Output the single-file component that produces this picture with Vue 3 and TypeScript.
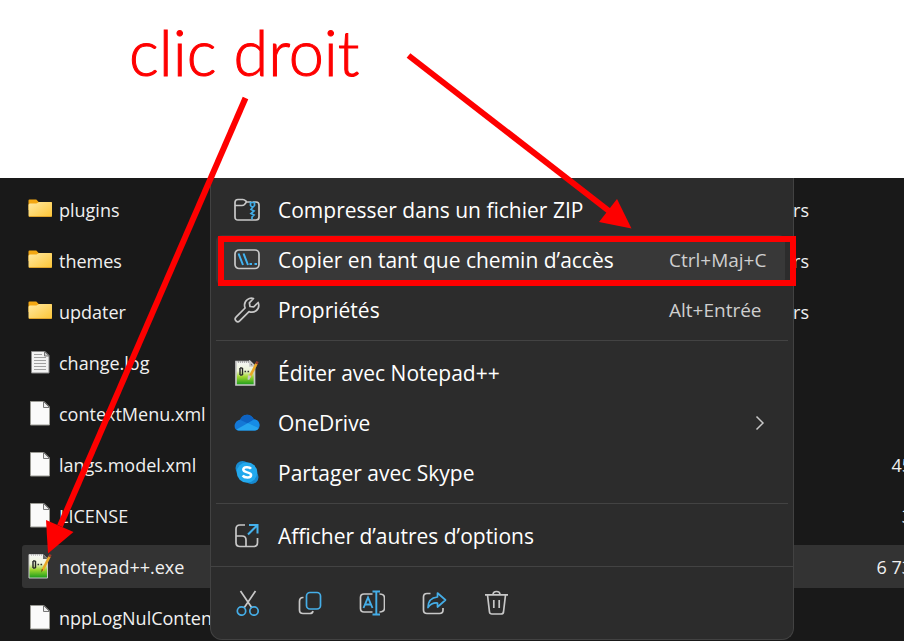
<script setup lang="ts">
type FileKind = 'folder' | 'log' | 'file' | 'npp'

interface FileRow {
  name: string
  kind: FileKind
  type?: string
  size?: string
  selected?: boolean
}

interface MenuItem {
  label: string
  icon: string
  shortcut?: string
  submenu?: boolean
  active?: boolean
}

const files: FileRow[] = [
  { name: 'plugins', kind: 'folder', type: 'ers' },
  { name: 'themes', kind: 'folder', type: 'ers' },
  { name: 'updater', kind: 'folder', type: 'ers' },
  { name: 'change.log', kind: 'log' },
  { name: 'contextMenu.xml', kind: 'file' },
  { name: 'langs.model.xml', kind: 'file', size: '45' },
  { name: 'LICENSE', kind: 'file', size: '3' },
  { name: 'notepad++.exe', kind: 'npp', size: '6 73', selected: true },
  { name: 'nppLogNulConten', kind: 'file' },
]

const groups: MenuItem[][] = [
  [
    { label: 'Compresser dans un fichier ZIP', icon: 'zip' },
    { label: 'Copier en tant que chemin d’accès', icon: 'path', shortcut: 'Ctrl+Maj+C', active: true },
    { label: 'Propriétés', icon: 'wrench', shortcut: 'Alt+Entrée' },
  ],
  [
    { label: 'Éditer avec Notepad++', icon: 'npp' },
    { label: 'OneDrive', icon: 'onedrive', submenu: true },
    { label: 'Partager avec Skype', icon: 'skype' },
  ],
  [{ label: 'Afficher d’autres d’options', icon: 'more' }],
]

const actions = [
  { id: 'cut', label: 'Couper' },
  { id: 'copy', label: 'Copier' },
  { id: 'rename', label: 'Renommer' },
  { id: 'share', label: 'Partager' },
  { id: 'delete', label: 'Supprimer' },
]
</script>

<template>
  <main class="page">
    <svg class="defs" aria-hidden="true">
      <defs>
        <linearGradient id="folderFill" x1="0" y1="0" x2="1" y2="1">
          <stop offset="0" stop-color="#ffe9a2" />
          <stop offset="1" stop-color="#fdc535" />
        </linearGradient>
        <linearGradient id="nppFill" x1="0" y1="0" x2="0" y2="1">
          <stop offset="0" stop-color="#f6f6f6" />
          <stop offset="0.4" stop-color="#eef5d8" />
          <stop offset="0.65" stop-color="#9fd62e" />
          <stop offset="1" stop-color="#169a1c" />
        </linearGradient>
        <symbol id="npp" viewBox="0 0 25 26">
          <path d="M1 1.500h14l4.500 4.500v19H1z" fill="url(#nppFill)" stroke="#c9c9c9" />
          <path d="M3 2h12" stroke="#999" stroke-dasharray="1 1" />
          <path d="M15 1.500l4.500 4.500H15z" fill="#666" />
          <path d="M5 8v7M7.500 8v7" stroke="#222" stroke-width="1.400" />
          <path d="M5 8h2.500M5 15h2.500M9.500 11.500h1.600M12.500 11.500h1.600" stroke="#333" stroke-width="1.300" />
          <path d="M21.500 3.500L14.500 17.500" stroke="#e9a827" stroke-width="2.600" />
          <path d="M22.500 1.500l-1.200 2.400" stroke="#963c2c" stroke-width="2.600" />
          <path d="M15 16.500l-1.600 3 .3-3.200z" fill="#473015" />
        </symbol>
      </defs>
    </svg>

    <header class="note">
      <h1>clic droit</h1>
    </header>

    <section class="explorer">
      <table class="files">
        <tbody>
          <tr v-for="file in files" :key="file.name" :class="{ selected: file.selected }">
            <td class="name">
              <span class="cell">
                <svg v-if="file.kind === 'folder'" class="glyph" viewBox="0 0 25 26">
                  <path d="M.5 6V4.500Q.5 3.500 1.500 3.500h6.800l2.400 2.500h12Q24 6 24 7v7H.5z" fill="#f3a712" />
                  <path d="M.5 9q0-1.500 1.500-1.500h6.500l2.500-1.500h12q1 0 1 1v12.500q0 1.500-1.500 1.500H2Q.5 21 .5 19.500z" fill="url(#folderFill)" />
                  <path d="M1 20.500h22.500" stroke="#dfa32b" />
                </svg>
                <svg v-else-if="file.kind === 'log'" class="glyph" viewBox="0 0 25 26">
                  <path d="M3.500 2.500h13.500l4 4v17.500H3.500z" fill="#f2f2f2" stroke="#8b8b8b" />
                  <path d="M6 5.500h8M6 8.500h12M6 11.500h12M6 14.500h12M6 17.500h12M6 20.500h12" stroke="#a0a0a0" />
                  <path d="M16.500 2.500v4.500h4.500z" fill="#ccc" stroke="#777" />
                </svg>
                <svg v-else-if="file.kind === 'file'" class="glyph" viewBox="0 0 25 26">
                  <path d="M2.500 1.500h13.500l5.500 5.500v18H2.500z" fill="#fafafa" stroke="#9a9a94" />
                  <path d="M15.500 1.500v6h6z" fill="#eee" stroke="#777" />
                </svg>
                <svg v-else class="glyph" viewBox="0 0 25 26"><use href="#npp" /></svg>
                <span>{{ file.name }}</span>
              </span>
            </td>
            <td class="type">{{ file.type }}</td>
            <td class="size">{{ file.size }}</td>
          </tr>
        </tbody>
      </table>

      <nav class="menu" aria-label="Menu contextuel">
        <div v-for="(group, index) in groups" :key="index" class="group">
          <button v-for="item in group" :key="item.label" type="button" class="item" :class="{ active: item.active }">
            <svg class="icon" viewBox="0 0 26 26" fill="none" stroke="#c8c8c8" stroke-width="1.700">
              <template v-if="item.icon === 'zip'">
                <path d="M18 4.500h3.500q3 0 3 3v12q0 3-3 3h-18q-3 0-3-3V5q0-3 3-3h4.800q1.700 0 2.700 1.200l1.200 1.300H17" transform="translate(.5 .5)" />
                <path d="M1 8.500h7q1.500 0 2.500-1l2-2.500" />
                <path d="M16.500 5.500h4v3l-2 2-2-2zM18.500 10.500l-1.500 2 3 1.500-3 2.500 3 1.500-2 2v2.500" stroke="#42aee9" />
              </template>
              <template v-else-if="item.icon === 'path'">
                <rect x="1" y="3" width="24" height="18.500" rx="4" />
                <path d="M4.500 6.500l4.500 11.500M9.500 6.500l4.500 11.500" stroke="#42b4f2" stroke-width="2" />
                <path d="M15.500 17h2.500M20.500 17h2.500" stroke="#42b4f2" stroke-width="2.200" />
              </template>
              <path
                v-else-if="item.icon === 'wrench'"
                d="M19.500 1.500C15 .2 10.500 3.500 10.500 8q0 1.500.6 3L2 20.200q-1.800 1.900 0 3.700t3.700 0L15 14.600c5 1.900 9.800-1.400 9.800-6.100q0-1.500-.6-3l-4.500 4.300-3.700-.3-.6-3.700z"
                stroke-linejoin="round"
              />
              <use v-else-if="item.icon === 'npp'" href="#npp" x="1" y="0" width="25" height="26" />
              <g v-else-if="item.icon === 'onedrive'" stroke="none">
                <path d="M4 20.500C-1 20-.5 11 6 9.800 8.500 3.500 17 2.500 20 9.500c7 0 7.500 10 1.500 11z" fill="#1478d6" />
                <path d="M6 9.800C8.500 3.500 17 2.500 20 9.500l-6 4z" fill="#0d62c2" />
                <path d="M14 13l6-3.500c4.500 0 6.500 5 4.500 8.500z" fill="#168ce5" />
                <path d="M2.500 19.500L14 13l10.700 5q-1 2.500-4 2.500H5q-1.500 0-2.500-1z" fill="#26a5ef" />
              </g>
              <g v-else-if="item.icon === 'skype'" stroke="none">
                <circle cx="8.500" cy="8" r="7" fill="#188bd0" />
                <circle cx="17.500" cy="17" r="7" fill="#1689d0" />
                <circle cx="13" cy="12.500" r="10.300" fill="#23a9ed" />
                <path d="M17 8.800c-1.500-2.200-7.700-2.300-7.700.8 0 3.700 7.800 1.800 7.800 5.400 0 3.400-6.600 3.200-8.400.5" fill="none" stroke="#fff" stroke-width="2.500" />
              </g>
              <template v-else>
                <path d="M11 2H6Q2 2 2 6v13.500q0 4 4 4h13.500q4 0 4-4V15M2 13h6q4 0 4 4v6.500" />
                <path d="M15 2h8.500v8.500M23.500 2L14 11.500" stroke="#45b1ec" stroke-width="2" />
              </template>
            </svg>
            <span class="label">{{ item.label }}</span>
            <kbd v-if="item.shortcut" class="shortcut">{{ item.shortcut }}</kbd>
            <svg v-if="item.submenu" class="chevron" viewBox="0 0 10 16" fill="none" stroke="#c8c8c8" stroke-width="1.500">
              <path d="M1.500 1.500L8 8l-6.500 6.500" />
            </svg>
          </button>
        </div>

        <div class="toolbar">
          <button v-for="action in actions" :key="action.id" type="button" class="tool" :aria-label="action.label">
            <svg class="icon" viewBox="0 0 26 26" fill="none" stroke="#c8c8c8" stroke-width="1.700">
              <template v-if="action.id === 'cut'">
                <path d="M5.500 1l11.500 17M20.500 1L9 18" />
                <g stroke="#45aee8"><circle cx="6.500" cy="21" r="4.200" /><circle cx="19" cy="21" r="4.200" /></g>
              </template>
              <template v-else-if="action.id === 'copy'">
                <path d="M6.500 7.500H6q-3.500 0-3.500 4V20q0 3.500 3.500 3.500h7q2.500 0 3-2.500" />
                <rect x="9.500" y="2.500" width="14" height="16.500" rx="3.500" stroke="#45aee8" />
              </template>
              <template v-else-if="action.id === 'rename'">
                <path d="M13.500 4H5Q1.500 4 1.500 7.500v11Q1.500 22 5 22h8.500M20.500 4q5 0 5 4v10q0 4-5 4" />
                <path d="M4.500 18L9 7.500 13.500 18M6.200 14.500h5.600M13.500 1.500h7.500M13.500 24.500h7.500M17.300 1.500v23" stroke="#45aee8" stroke-width="1.900" />
              </template>
              <template v-else-if="action.id === 'share'">
                <path d="M9.500 3.500H6Q2.500 3.500 2.500 7v13q0 3.500 3.500 3.500h12.500q3.500 0 3.500-3.500v-2" />
                <path d="M16.500 3l8 7-8 7v-4q-6-.5-9.500 4.500Q7 8 16.500 7z" stroke="#45aee8" stroke-linejoin="round" />
              </template>
              <template v-else>
                <path d="M2 4.800h23M10 4.800q0-3.300 3.500-3.300T17 4.800M4.500 5l2 17q.2 2 2.500 2h9q2.200 0 2.500-2l2-17M10.800 10v8M16.200 10v8" />
              </template>
            </svg>
          </button>
        </div>
      </nav>
    </section>

    <svg class="marks" viewBox="0 0 904 641" width="904" height="641" aria-hidden="true">
      <g fill="none" stroke="#fe0000" stroke-width="6">
        <path d="M245.500 98L60 526" />
        <path d="M408.500 55.500L609 211" />
        <rect x="221" y="239" width="572" height="44" />
      </g>
      <g fill="#fe0000">
        <path d="M46 520l27.500 12L48 553.500z" />
        <path d="M617 199l-18 23 32.500 6.500z" />
      </g>
    </svg>
  </main>
</template>

<style>
body {
  margin: 0;
  background: #fff;
}
</style>

<style scoped>
.page {
  position: relative;
  display: flex;
  flex-direction: column;
  min-height: 100vh;
  overflow: hidden;
  font-family: "Open Sans", "Noto Sans", sans-serif;
}
.defs {
  position: absolute;
  width: 0;
  height: 0;
}
.note {
  box-sizing: border-box;
  height: 178px;
  padding: 16px 129px;
}
h1 {
  margin: 0;
  color: #fe0000;
  font: 300 63px/72px Lato, sans-serif;
  -webkit-text-stroke: 1px #fe0000;
}
.explorer {
  position: relative;
  flex: 1;
  overflow: hidden;
  background: #191919;
  color: #f0f0f0;
}
.files {
  width: calc(100% - 14px);
  margin: 2px 0 0 22px;
  border-spacing: 0 8px;
  table-layout: fixed;
  font-size: 18px;
  line-height: 42px;
}
td {
  height: 42px;
  padding: 1px 0 0;
  white-space: nowrap;
}
.name {
  border-radius: 3px 0 0 3px;
}
.cell {
  display: flex;
  align-items: center;
  gap: 6px;
  padding-left: 6px;
}
.glyph {
  width: 25px;
  height: 26px;
  margin-bottom: 2px;
}
.type {
  width: 120px;
  text-align: right;
}
.size {
  width: 103px;
  text-align: right;
}
.selected td {
  background: #333;
}
.menu {
  position: absolute;
  top: 0;
  right: 110px;
  left: 210px;
  padding-top: 7px;
  border: 1px solid #424242;
  border-top: 0;
  border-radius: 0 0 12px 12px;
  background: #2c2c2c;
}
.group {
  margin: 0 5px;
  padding-right: 3px;
}
.group + .group {
  margin-top: 5px;
  padding-top: 7px;
  border-top: 1px solid #434343;
}
button {
  border: 0;
  background: none;
  color: #fff;
  font: inherit;
  text-align: left;
}
.item {
  display: flex;
  align-items: center;
  width: 100%;
  height: 50px;
  padding: 0 0 0 18px;
  font-size: 21px;
}
.active {
  border-radius: 6px;
  background: #383838;
}
.icon {
  flex: none;
  display: block;
  width: 26px;
  height: 26px;
}
.label {
  flex: 1;
  margin-left: 18px;
  white-space: nowrap;
}
.shortcut {
  width: 116px;
  color: #cfcfcf;
  font: inherit;
  font-size: 19px;
}
.chevron {
  width: 10px;
  height: 16px;
  margin-right: 20px;
}
.toolbar {
  display: flex;
  gap: 36px;
  margin-top: 5px;
  padding: 23px 24px;
  border-top: 1px solid #434343;
}
.tool {
  padding: 0;
}
.marks {
  position: absolute;
  top: 0;
  left: 0;
  pointer-events: none;
}
</style>
